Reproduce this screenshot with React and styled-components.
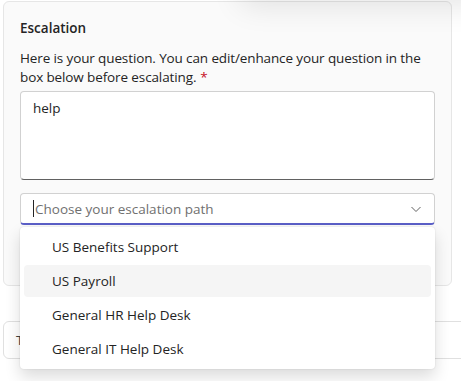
import styled, { createGlobalStyle } from "styled-components";

const GlobalStyle = createGlobalStyle`
  body {
    margin: 0;
    background: #ffffff;
    font-family: "Open Sans", "Noto Sans", sans-serif;
    color: #242424;
  }
`;

const Page = styled.div`
  position: relative;
  width: 461px;
  height: 381px;
  overflow: hidden;
  padding: 1px 0 0 3px;
  box-sizing: border-box;
`;

// shadow of the popup sitting above the visible area
const TopShadow = styled.div`
  position: absolute;
  top: -40px;
  left: 240px;
  right: -30px;
  height: 40px;
  background: #fafafa;
  box-shadow: 0 6px 30px rgba(0, 0, 0, 0.1);
  border-radius: 8px;
  z-index: 2;
`;

const Card = styled.div`
  width: 449px;
  box-sizing: border-box;
  background: #fafafa;
  border: 1px solid #e6e6e6;
  border-radius: 6px;
  padding: 16px 16px 0 16px;
  height: 285px;
`;

const Title = styled.div`
  font-size: 13.5px;
  font-weight: 600;
  line-height: 20px;
  margin-bottom: 11px;
`;

const Label = styled.div`
  font-size: 13.5px;
  line-height: 19px;
  letter-spacing: -0.12px;
  margin-bottom: 4px;
`;

const Required = styled.span`
  color: #c50f1f;
  padding-left: 4px;
`;

const TextArea = styled.div`
  height: 89px;
  box-sizing: border-box;
  background: #ffffff;
  border: 1px solid #d1d1d1;
  border-bottom-color: #616161;
  border-radius: 4px;
  padding: 6px 12px;
  font-size: 13.5px;
  line-height: 20px;
`;

const SelectWrap = styled.div`
  position: relative;
  margin-top: 13px;
`;

const SelectBox = styled.div`
  height: 32px;
  box-sizing: border-box;
  display: flex;
  align-items: center;
  background: #ffffff;
  border: 1px solid #d1d1d1;
  border-bottom: 2px solid #5b5fc7;
  border-radius: 4px;
  padding: 0 12px;
  font-size: 13.5px;
`;

const Caret = styled.span`
  width: 1px;
  height: 17px;
  background: #242424;
  margin-right: 1px;
`;

const Placeholder = styled.span`
  flex: 1;
  color: #707070;
`;

const Menu = styled.div`
  position: absolute;
  top: 34px;
  left: 0;
  right: 0;
  background: #ffffff;
  border-radius: 4px;
  box-shadow: 0 0 2px rgba(0, 0, 0, 0.12), 0 8px 16px rgba(0, 0, 0, 0.14);
  padding: 4px;
  display: flex;
  flex-direction: column;
  gap: 2px;
  z-index: 3;
`;

const Option = styled.div`
  height: 32px;
  display: flex;
  align-items: center;
  padding-left: 28px;
  border-radius: 4px;
  font-size: 13.5px;
  background: ${(p) => (p.$active ? "#f5f5f5" : "transparent")};
`;

const SecondCard = styled.div`
  margin-top: 35px;
  width: 480px;
  height: 38px;
  box-sizing: border-box;
  background: #ffffff;
  border: 1px solid #e0e0e0;
  border-radius: 6px;
  display: flex;
  align-items: center;
  padding-left: 12px;
  font-size: 13.5px;
  color: #424242;
`;

const options = [
  "US Benefits Support",
  "US Payroll",
  "General HR Help Desk",
  "General IT Help Desk",
];

export default function App() {
  return (
    <>
      <GlobalStyle />
      <Page>
        <TopShadow />
        <Card>
          <Title>Escalation</Title>
          <Label>
            Here is your question. You can edit/enhance your question in the
            box below before escalating.<Required>*</Required>
          </Label>
          <TextArea>help</TextArea>
          <SelectWrap>
            <SelectBox>
              <Caret />
              <Placeholder>Choose your escalation path</Placeholder>
              <svg width="12" height="12" viewBox="0 0 12 12">
                <path
                  d="M1.5 4 L6 8.5 L10.5 4"
                  fill="none"
                  stroke="#616161"
                  strokeWidth="1"
                />
              </svg>
            </SelectBox>
            <Menu>
              {options.map((o, i) => (
                <Option key={o} $active={i === 1}>
                  {o}
                </Option>
              ))}
            </Menu>
          </SelectWrap>
        </Card>
        <SecondCard>Type</SecondCard>
      </Page>
    </>
  );
}
